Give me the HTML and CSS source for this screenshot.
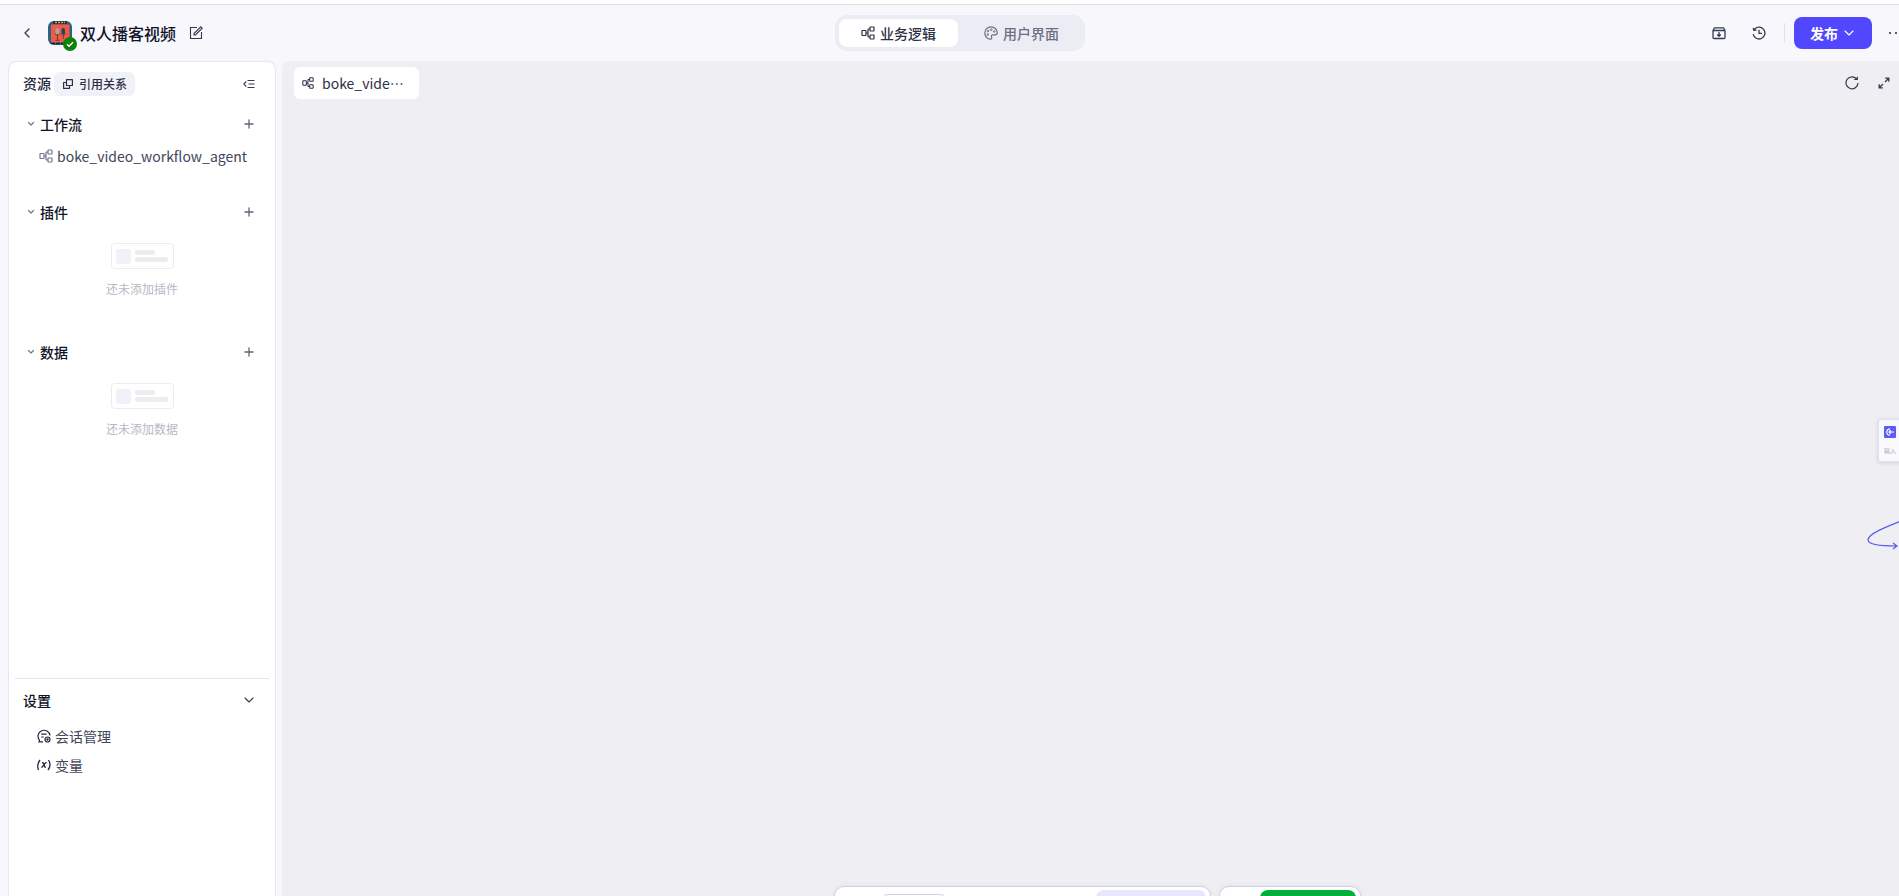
FILE: index.html
```html
<!DOCTYPE html>
<html lang="zh-CN">
<head>
	<meta charset="UTF-8">
	<title>双人播客视频</title>
	<link rel="stylesheet" href="styles.css">
</head>
<body>
	<!-- shared icons -->
	<svg class="sprite" aria-hidden="true">
		<symbol id="flow" viewBox="0 0 14 14">
			<g fill="none" stroke="currentColor" stroke-width="1.2">
				<rect x="1" y="4.500" width="4" height="5" rx=".4"/>
				<rect x="9" y="1" width="4" height="4" rx=".4"/>
				<rect x="9" y="9" width="4" height="4" rx=".4"/>
				<path d="M5 7h2M9 3H7.500Q7 3 7 3.500v7q0 .5.5.5H9"/>
			</g>
		</symbol>
		<symbol id="down" viewBox="0 0 10 10">
			<path d="M1 3l4 4 4-4" fill="none" stroke="currentColor" stroke-width="1.1" stroke-linecap="round" stroke-linejoin="round"/>
		</symbol>
		<symbol id="fold" viewBox="0 0 8 8">
			<path d="M1.500 2.500L4 5l2.500-2.500" fill="none" stroke="currentColor" stroke-width="1.2" stroke-linecap="round" stroke-linejoin="round"/>
		</symbol>
		<symbol id="plus" viewBox="0 0 10 10">
			<path d="M5 1v8M1 5h8" fill="none" stroke="currentColor" stroke-width="1.3" stroke-linecap="round"/>
		</symbol>
		<symbol id="blank" viewBox="0 0 63 26">
			<rect x=".5" y=".5" width="62" height="25" rx="3" fill="#fff" stroke="#ececee"/>
			<rect x="5" y="6" width="15" height="15" rx="3" fill="#f1f2f9"/>
			<rect x="24" y="7" width="20" height="5" rx="2" fill="#ededf0"/>
			<rect x="24" y="14" width="33" height="5" rx="2" fill="#ededf0"/>
		</symbol>
	</svg>

	<header class="topbar">
		<div class="project">
			<button class="icon-btn" aria-label="返回">
				<svg width="14" height="14" viewBox="0 0 14 14"><path d="M9 3L5 7l4 4" fill="none" stroke="currentColor" stroke-width="1.3" stroke-linecap="round" stroke-linejoin="round"/></svg>
			</button>
			<div class="avatar">
				<svg width="24" height="24" viewBox="0 0 24 24">
					<defs><clipPath id="round"><rect width="24" height="24" rx="6"/></clipPath></defs>
					<g clip-path="url(#round)">
						<rect width="24" height="24" fill="#2f6185"/>
						<rect x="5" y="0" width="14" height="3" fill="#27303a"/>
						<path d="M7 1.500h10" stroke="#d9a85a" stroke-width="1.500" stroke-dasharray="2 1"/>
						<rect x="3" y="3.500" width="18.500" height="18" rx="1" fill="#ee5a46"/>
						<rect x="7.500" y="7" width="4" height="6.500" rx="2" fill="#a9a39b"/>
						<rect x="13.500" y="7" width="3.500" height="6.500" rx="1.700" fill="#2c4450"/>
						<path d="M9.500 13v6M15.300 13v5M7.500 19.300h4" fill="none" stroke="#5b4643" stroke-width="1"/>
						<path d="M7 12q.3 2.500 2.500 2.500T12 12M13 12q.3 2.500 2.300 2.500T17.600 12" fill="none" stroke="#6d4743" stroke-width=".7"/>
						<path d="M3 22.500h13" stroke="#152532" stroke-width="1.500" stroke-dasharray="4 1"/>
					</g>
				</svg>
				<span class="badge">
					<svg width="8" height="8" viewBox="0 0 8 8"><path d="M1 4.200l2 2 4-4" fill="none" stroke="#fff" stroke-width="1.4"/></svg>
				</span>
			</div>
			<h1>双人播客视频</h1>
			<button class="icon-btn edit" aria-label="编辑">
				<svg width="14" height="14" viewBox="0 0 14 14"><path d="M8 1.500H1.500v11h11V6M5 9V7.500L11.800.8l1.400 1.400L6.500 9z" fill="none" stroke="currentColor" stroke-width="1.1"/></svg>
			</button>
		</div>

		<nav class="tabs">
			<button class="active"><svg width="14" height="14"><use href="#flow"/></svg>业务逻辑</button>
			<button>
				<svg width="14" height="14" viewBox="0 0 14 14">
					<path d="M7 .8C3.500.8.8 3.500.8 7s2.700 6.200 5.500 6.200c1.500 0 1.800-1 1.300-2-.5-1.200 0-2.400 1.400-2.400h2c1.500 0 2.200-.8 2.200-2C13.200 3.300 10.500.8 7 .8z" fill="none" stroke="currentColor" stroke-width="1.200"/>
					<g fill="none" stroke="currentColor"><circle cx="3.800" cy="8.500" r=".8"/><circle cx="4" cy="5" r=".8"/><circle cx="7.200" cy="3.700" r=".8"/><circle cx="10.200" cy="5.500" r=".8"/></g>
				</svg>用户界面
			</button>
		</nav>

		<div class="actions">
			<button class="icon-btn" aria-label="归档">
				<svg width="14" height="14" viewBox="0 0 14 14"><path d="M1 4.500h12v7q0 1-1 1H2q-1 0-1-1zM1 4.500l1.500-2.700h9L13 4.500M7 6v4M5.200 8.500L7 10.300l1.800-1.800" fill="none" stroke="currentColor" stroke-width="1.300" stroke-linejoin="round"/></svg>
			</button>
			<button class="icon-btn" aria-label="历史">
				<svg width="14" height="14" viewBox="0 0 14 14"><path d="M2.200 3.700A5.900 5.900 0 1 1 1.200 8M1.300 1.800l.5 2.600 2.700-.2M7 3.800v3.500h3" fill="none" stroke="currentColor" stroke-width="1.300"/></svg>
			</button>
			<span class="split"></span>
			<button class="publish">发布<svg width="10" height="10"><use href="#down"/></svg></button>
			<button class="icon-btn" aria-label="更多">
				<svg width="16" height="4" viewBox="0 0 16 4" fill="currentColor"><circle cx="2" cy="2" r="1.100"/><circle cx="8" cy="2" r="1.100"/><circle cx="14" cy="2" r="1.100"/></svg>
			</button>
		</div>
	</header>

	<div class="workspace">
		<aside class="sidebar">
			<div class="side-head">
				<h2>资源</h2>
				<button class="relation">
					<svg width="10" height="10" viewBox="0 0 10 10"><path d="M3.500.6h5.900v5.900H3.500zM3.500 3.500H.6v5.900h5.900V6.500" fill="none" stroke="currentColor" stroke-width="1.200" stroke-linejoin="round"/></svg>引用关系
				</button>
				<button class="icon-btn small" aria-label="收起">
					<svg width="12" height="10" viewBox="0 0 12 10"><path d="M4.500 1.500h7M5.500 5h6M4.500 8.500h7M3.300 2.500L.8 5l2.500 2.500" fill="none" stroke="currentColor" stroke-width="1.100"/></svg>
				</button>
			</div>

			<div class="resources">
				<section class="group">
					<div class="group-head">
						<svg width="8" height="8"><use href="#fold"/></svg>
						<h3>工作流</h3>
						<button class="icon-btn small" aria-label="添加工作流"><svg width="10" height="10"><use href="#plus"/></svg></button>
					</div>
					<a href="#" class="item"><svg width="14" height="14"><use href="#flow"/></svg>boke_video_workflow_agent</a>
				</section>
				<section class="group">
					<div class="group-head">
						<svg width="8" height="8"><use href="#fold"/></svg>
						<h3>插件</h3>
						<button class="icon-btn small" aria-label="添加插件"><svg width="10" height="10"><use href="#plus"/></svg></button>
					</div>
					<div class="empty">
						<svg width="63" height="26"><use href="#blank"/></svg>
						<p>还未添加插件</p>
					</div>
				</section>
				<section class="group">
					<div class="group-head">
						<svg width="8" height="8"><use href="#fold"/></svg>
						<h3>数据</h3>
						<button class="icon-btn small" aria-label="添加数据"><svg width="10" height="10"><use href="#plus"/></svg></button>
					</div>
					<div class="empty">
						<svg width="63" height="26"><use href="#blank"/></svg>
						<p>还未添加数据</p>
					</div>
				</section>
			</div>

			<section class="settings">
				<div class="settings-head">
					<h3>设置</h3>
					<button class="icon-btn small" aria-label="展开设置"><svg width="10" height="10"><use href="#down"/></svg></button>
				</div>
				<a href="#">
					<svg width="14" height="14" viewBox="0 0 14 14"><g fill="none" stroke="currentColor" stroke-width="1.200"><path d="M6 12.800H2l.5-1.600A6 6 0 1 1 13 6.500M4.200 5.200h5.300M4.200 8h2.500"/><circle cx="10.500" cy="10.500" r="2.500"/><circle cx="10.500" cy="10.500" r=".6"/></g></svg>会话管理
				</a>
				<a href="#">
					<svg width="14" height="14" viewBox="0 0 14 14"><path d="M3 2Q-.6 7 1.500 12M11.500 2q3.200 5-.5 10M5 4.800q1.300-.4 1.800 1l.7 2.600q.3 1.200 1.500.6M9.500 4.800q-1-.2-2 1.200L6 8.200q-.8 1.200-1.700.8" fill="none" stroke="currentColor" stroke-width="1.300"/></svg>变量
				</a>
			</section>
		</aside>

		<main class="canvas">
			<div class="canvas-bar">
				<button class="file"><svg width="12" height="12"><use href="#flow"/></svg>boke_vide…</button>
				<div class="tools">
					<button class="icon-btn" aria-label="刷新">
						<svg width="14" height="14" viewBox="0 0 14 14"><path d="M12 3.500A6 6 0 1 0 13 7M9.300 3.500h3V.8" fill="none" stroke="currentColor" stroke-width="1.200"/></svg>
					</button>
					<button class="icon-btn" aria-label="全屏">
						<svg width="12" height="12" viewBox="0 0 12 12"><path d="M7.200 1.200h3.600v3.600M10.800 1.200L7 5M4.800 10.800H1.200V7.200M1.200 10.800L5 7" fill="none" stroke="currentColor" stroke-width="1.300"/></svg>
					</button>
				</div>
			</div>

			<div class="node">
				<svg width="12" height="12" viewBox="0 0 12 12"><rect width="12" height="12" rx="1" fill="#5a5cfb"/><path d="M10 6H5M6.800 4.200L5 6l1.800 1.800M6 2.800A3.200 3.200 0 1 0 6 9.200" fill="none" stroke="#fff" stroke-width="1.200"/></svg>
				<span>输入</span>
			</div>
			<svg class="edge" width="44" height="34" viewBox="0 0 44 34"><path d="M44 1C24 9 1 17 1 24c0 5 15 6 29 6M26 27l4 3-4 3" fill="none" stroke="#5a5af0" stroke-width="1.200"/></svg>

			<div class="dock">
				<div class="panel">
					<button class="zoom" aria-label="缩放"></button>
					<button class="add" aria-label="添加节点"></button>
				</div>
				<div class="panel">
					<button class="run" aria-label="试运行"></button>
				</div>
			</div>
		</main>
	</div>
</body>
</html>
```
FILE: styles.css
```css
* {
	box-sizing: border-box;
}
html {
	height: 100%;
	overflow: hidden;
}
body {
	background-color: #f7f7fc;
	border-top: 4px solid #fff;
	color: #0f1328;
	display: flex;
	flex-direction: column;
	font: 14px/20px "Noto Sans CJK SC", sans-serif;
	height: 100%;
	margin: 0;
	/* the editor runs a little past the right side of the window */
	width: calc(100% + 21px);
}
h1, h2, h3, p {
	font-size: 14px;
	font-weight: 500;
	margin: 0;
}
button {
	background: none;
	border: none;
	color: inherit;
	cursor: pointer;
	font: inherit;
	padding: 0;
}
a {
	color: inherit;
	text-decoration: none;
}
svg {
	flex: none;
}
.sprite {
	display: none;
}
.icon-btn {
	align-items: center;
	color: #343a50;
	display: flex;
	flex: none;
	height: 32px;
	justify-content: center;
	width: 32px;
}
.icon-btn.small {
	height: 24px;
	margin-left: auto;
	width: 24px;
}

/* top bar */
.topbar {
	align-items: center;
	border-top: 1px solid #dedee2;
	display: grid;
	flex: none;
	grid-template-columns: 1fr auto 1fr;
	height: 57px;
	padding: 0 8px;
}
.project {
	align-items: center;
	display: flex;
	padding-left: 3px;
}
.project h1 {
	font-size: 16px;
	line-height: 24px;
	margin-left: 8px;
}
.avatar {
	height: 24px;
	margin-left: 5px;
	position: relative;
	width: 24px;
}
.avatar svg {
	display: block;
}
.badge {
	align-items: center;
	background-color: #0a820a;
	border-radius: 50%;
	bottom: -6px;
	display: flex;
	height: 14px;
	justify-content: center;
	position: absolute;
	right: -5px;
	width: 14px;
}
.edit {
	margin-left: 4px;
}
.tabs {
	background-color: #ececf5;
	border-radius: 12px;
	display: flex;
	gap: 4px;
	padding: 4px;
}
.tabs button {
	align-items: center;
	border-radius: 8px;
	color: #6b6e85;
	display: flex;
	font-weight: 500;
	gap: 5px;
	height: 28px;
	justify-content: center;
	width: 119px;
}
.tabs button.active {
	background-color: #fff;
	color: #2b3044;
}
.actions {
	align-items: center;
	display: flex;
	gap: 8px;
	justify-content: flex-end;
}
.split {
	background-color: #e2e2ea;
	height: 20px;
	margin: 0 1px;
	width: 1px;
}
.publish {
	align-items: center;
	background-color: #5147ff;
	border-radius: 8px;
	color: #fff;
	display: flex;
	font-weight: 700;
	gap: 6px;
	height: 32px;
	padding-left: 16px;
	width: 78px;
}

/* layout */
.workspace {
	display: flex;
	flex: 1;
	gap: 6px;
	min-height: 0;
	padding: 0 8px;
}

/* sidebar */
.sidebar {
	background-color: #fff;
	border: 1px solid #e6e6f2;
	border-bottom: none;
	border-radius: 8px 8px 0 0;
	display: flex;
	flex: none;
	flex-direction: column;
	width: 268px;
}
.side-head {
	align-items: center;
	display: flex;
	gap: 3px;
	padding: 10px 14px 12px;
}
.side-head h2 {
	color: #252a3d;
	padding-bottom: 2px;
}
.relation {
	align-items: center;
	background-color: #f1f2f9;
	border-radius: 6px;
	color: #2b3044;
	display: flex;
	font-size: 12px;
	font-weight: 500;
	gap: 6px;
	height: 24px;
	padding: 0 8px 0 9px;
}
.resources {
	flex: 1;
	overflow: hidden;
}
.group-head {
	align-items: center;
	display: flex;
	height: 32px;
	padding: 0 14px 0 18px;
}
.group-head > svg {
	color: #74778c;
	margin-right: 5px;
}
.group-head .icon-btn {
	color: #62657a;
}
.item {
	align-items: center;
	color: #41465a;
	display: flex;
	gap: 4px;
	height: 32px;
	margin-bottom: 24px;
	padding-left: 30px;
}
.item svg {
	color: #74778c;
}
.empty {
	align-items: center;
	display: flex;
	flex-direction: column;
	gap: 10px;
	padding: 15px 0 37px;
}
.empty p {
	color: #b6b8c5;
	font-size: 12px;
	font-weight: 400;
}
.settings {
	border-top: 1px solid #e4e4ee;
	display: flex;
	flex-direction: column;
	gap: 1px;
	margin: 0 6px;
	padding: 5px 8px 117px;
}
.settings-head {
	align-items: center;
	display: flex;
	height: 32px;
	margin-bottom: 5px;
}
.settings a {
	align-items: center;
	color: #41465a;
	display: flex;
	gap: 4px;
	height: 28px;
	padding-left: 14px;
}
.settings a svg {
	color: #25293a;
}

/* canvas */
.canvas {
	background-color: #efeef3;
	border-radius: 8px 0 0 0;
	flex: 1;
	min-width: 0;
	overflow: hidden;
	position: relative;
}
.canvas-bar {
	display: flex;
	justify-content: space-between;
	padding: 6px 12px;
}
.file {
	align-items: center;
	background-color: #fff;
	border-radius: 6px;
	color: #2b3044;
	display: flex;
	gap: 8px;
	height: 32px;
	padding: 0 8px;
	width: 125px;
}
.tools {
	display: flex;
}

/* nodes on the free canvas */
.node {
	background-color: #f9f9fe;
	border: 1px solid #e2e2ee;
	border-radius: 3px;
	box-shadow: 0 1px 4px rgba(40, 40, 80, .15);
	display: flex;
	flex-direction: column;
	gap: 7px;
	height: 43px;
	padding: 6px 5px;
	position: absolute;
	right: -26px;
	top: 358px;
	width: 60px;
}
.node span {
	color: #aaaabc;
	font-size: 6px;
	line-height: 12px;
}
.edge {
	position: absolute;
	right: 1px;
	top: 455px;
}
.dock {
	bottom: -38px;
	display: flex;
	gap: 8px;
	justify-content: center;
	left: 0;
	position: absolute;
	right: 0;
}
.panel {
	background-color: #fff;
	border: 1px solid #cdd1e5;
	border-radius: 10px;
	box-shadow: 0 0 6px rgba(40, 40, 80, .06);
	display: flex;
	height: 48px;
	justify-content: space-between;
	padding: 3px 4px 3px 47px;
}
.panel:first-child {
	width: 377px;
}
.panel:last-child {
	padding-left: 40px;
	width: 142px;
}
.zoom {
	border: 1px solid #cdd1e5;
	border-radius: 6px;
	height: 32px;
	margin-top: 4px;
	width: 64px;
}
.add,
.run {
	border-radius: 8px;
	height: 40px;
}
.add {
	background-color: #e6e7ff;
	width: 110px;
}
.run {
	background-color: #00b03c;
	width: 96px;
}
```
